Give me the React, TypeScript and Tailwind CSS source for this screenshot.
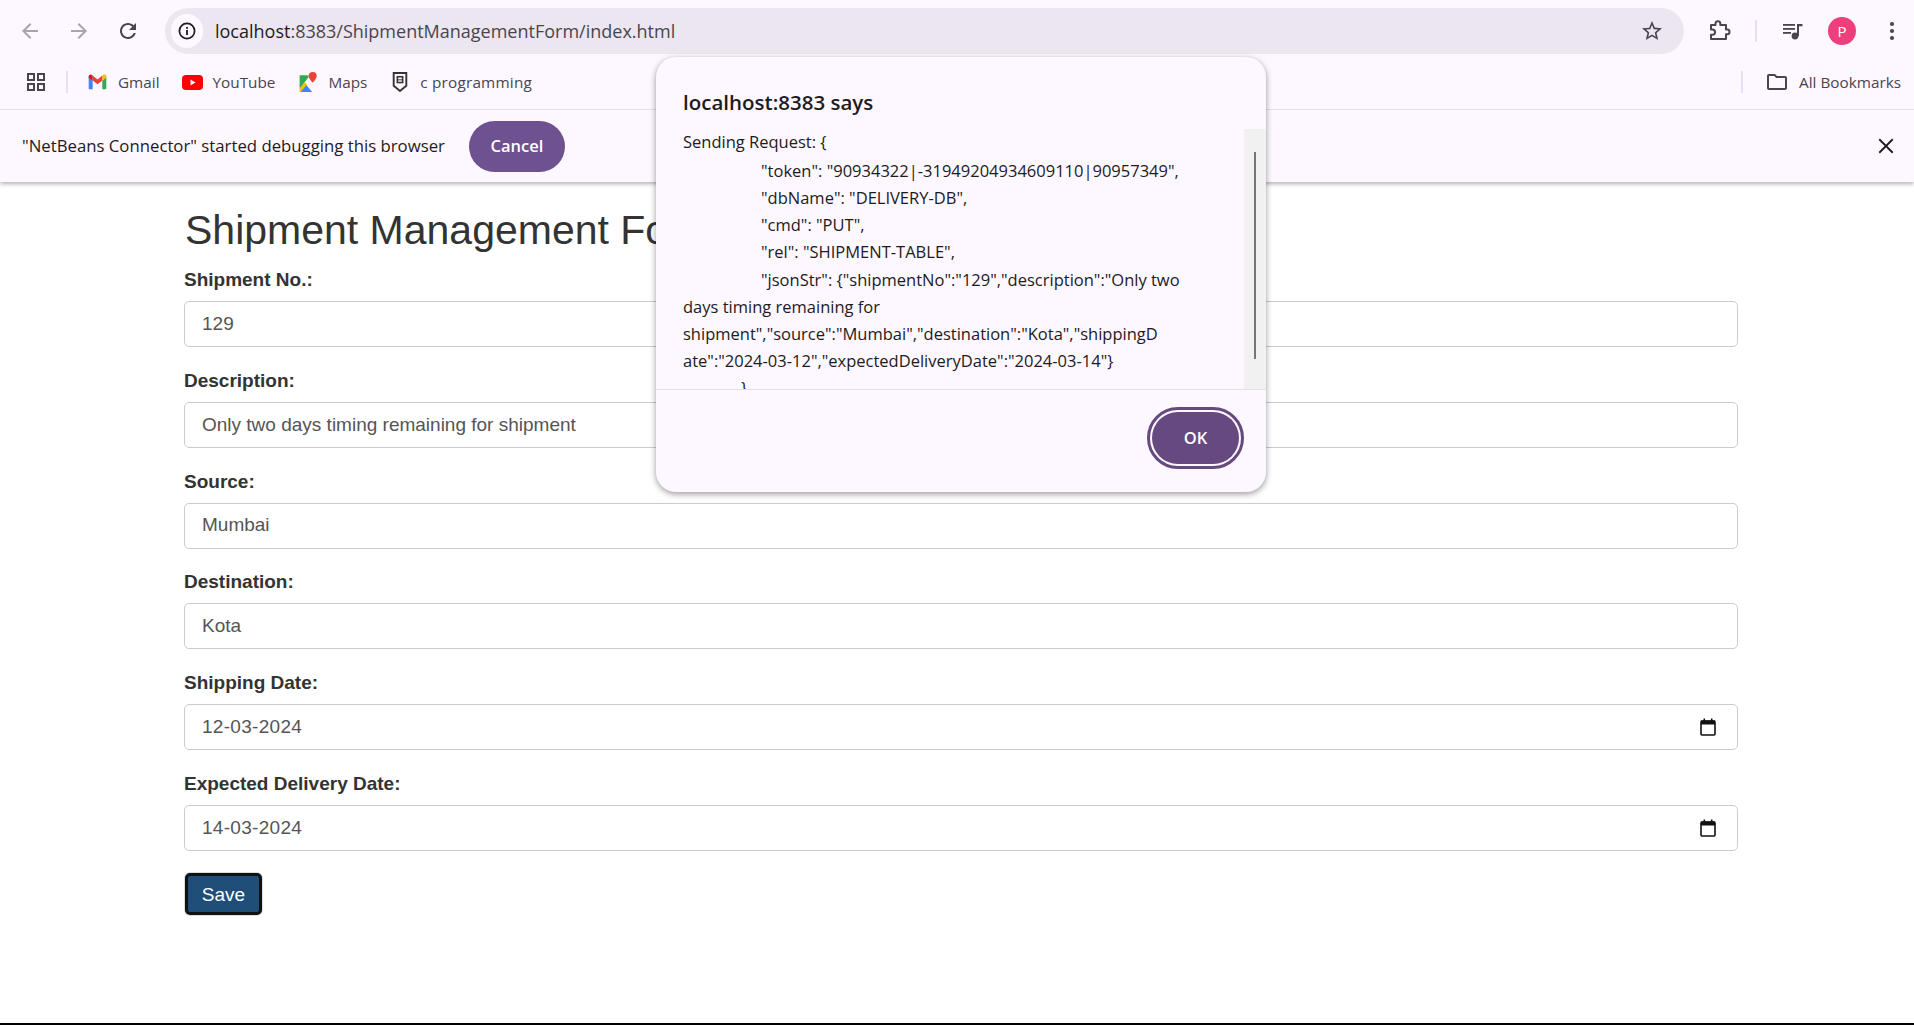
import React from "react";

const uiFont = "font-['Open_Sans','Noto_Sans',sans-serif]";

const fields = [
  { label: "Shipment No.:", value: "129" },
  { label: "Description:", value: "Only two days timing remaining for shipment" },
  { label: "Source:", value: "Mumbai" },
  { label: "Destination:", value: "Kota" },
  { label: "Shipping Date:", value: "12-03-2024", date: true },
  { label: "Expected Delivery Date:", value: "14-03-2024", date: true },
];

function Mi({ d, className, size = 24 }: { d: string; className?: string; size?: number }) {
  return (
    <svg width={size} height={size} viewBox="0 0 24 24" fill="currentColor" className={className}>
      <path d={d} />
    </svg>
  );
}

function Slot({ children }: { children: React.ReactNode }) {
  return <div className="w-[40px] h-[40px] flex items-center justify-center shrink-0">{children}</div>;
}

function NavSlot({ children }: { children: React.ReactNode }) {
  return <div className="w-[49px] h-[40px] flex items-center justify-center shrink-0">{children}</div>;
}

function CalendarIcon() {
  return (
    <svg width="16" height="18" viewBox="0 0 16 18" className="shrink-0">
      <rect x="1" y="3" width="14" height="14" rx="1" fill="none" stroke="#111" strokeWidth="1.6" />
      <rect x="1" y="2.5" width="14" height="4" fill="#111" />
      <rect x="3.5" y="0.5" width="1.6" height="3" fill="#111" />
      <rect x="10.9" y="0.5" width="1.6" height="3" fill="#111" />
    </svg>
  );
}

function Bookmark({ icon, text, className, textClass }: { icon: React.ReactNode; text: string; className?: string; textClass?: string }) {
  return (
    <div className={`flex items-center gap-[10px] ${className ?? ""}`}>
      <span className="w-[21px] h-[21px] flex items-center justify-center">{icon}</span>
      <span className={`text-[15.3px] text-[#49454f] ${textClass ?? ""}`}>{text}</span>
    </div>
  );
}

function BrowserChrome() {
  return (
    <div className={`relative z-10 bg-[#fdf7ff] shadow-[0_2px_4px_rgba(0,0,0,0.3)] ${uiFont}`}>
      <div className="h-[63px] flex items-center pl-[5px] pr-[2px] pb-[1px]">
        <NavSlot>
          <Mi className="text-[#a8a4ac]" d="M20 11H7.83l5.59-5.59L12 4l-8 8 8 8 1.41-1.41L7.83 13H20v-2z" />
        </NavSlot>
        <NavSlot>
          <Mi className="text-[#a8a4ac]" d="M12 4l-1.41 1.41L16.17 11H4v2h12.17l-5.58 5.59L12 20l8-8z" />
        </NavSlot>
        <NavSlot>
          <Mi
            className="text-[#49454f]"
            d="M17.65 6.35C16.2 4.9 14.21 4 12 4c-4.42 0-7.99 3.58-7.99 8s3.57 8 7.99 8c3.73 0 6.84-2.55 7.73-6h-2.08c-.82 2.33-3.04 4-5.65 4-3.31 0-6-2.69-6-6s2.69-6 6-6c1.66 0 3.14.69 4.22 1.78L13 11h7V4l-2.35 2.35z"
          />
        </NavSlot>
        <div className="ml-[13px] flex-1 h-[46px] rounded-full bg-[#ece6f0] flex items-center pl-[6px] pr-[20px]">
          <div className="w-[32px] h-[34px] rounded-full bg-[#fdf7ff] flex items-center justify-center">
            <svg width="20" height="20" viewBox="0 0 20 20">
              <circle cx="10" cy="10" r="7.6" fill="none" stroke="#1d1b20" strokeWidth="1.7" />
              <rect x="9.1" y="9" width="1.8" height="5" fill="#1d1b20" />
              <rect x="9.1" y="6" width="1.8" height="1.8" fill="#1d1b20" />
            </svg>
          </div>
          <span className="ml-[12px] text-[18px] text-[#1d1b20]">
            localhost<span className="text-[#49454f]">:8383/ShipmentManagementForm/index.html</span>
          </span>
          <Mi
            className="ml-auto text-[#49454f]"
            d="M22 9.24l-7.19-.62L12 2 9.19 8.63 2 9.24l5.46 4.73L5.82 21 12 17.27 18.18 21l-1.63-7.03L22 9.24zM12 15.4l-3.76 2.27 1-4.28-3.32-2.88 4.38-.38L12 6.1l1.71 4.04 4.38.38-3.32 2.88 1 4.28L12 15.4z"
          />
        </div>
        <div className="ml-[16px]">
          <Slot>
            <svg width="24" height="24" viewBox="0 0 24 24" fill="none" stroke="#49454f" strokeWidth="2">
              <path
                d="M3 6h4.500V4.600a2.400 2.400 0 0 1 4.800 0V6H18v4.600h1.200a2.300 2.300 0 0 1 0 4.600H18V20H3v-4.200h1.400a2.600 2.600 0 0 0 0-5.200H3z"
                strokeLinejoin="round"
              />
            </svg>
          </Slot>
        </div>
        <div className="ml-[15px] w-[2px] h-[22px] bg-[#e8def8]" />
        <div className="ml-[16px]">
          <Slot>
            <svg width="22" height="20" viewBox="0 0 22 20" fill="#49454f">
              <rect x="1" y="3" width="12" height="1.8" />
              <rect x="1" y="7" width="12" height="1.8" />
              <rect x="1" y="11" width="8" height="1.8" />
              <circle cx="13" cy="15" r="3.4" />
              <path d="M15 15V3h5.5v2.2H17V15z" />
            </svg>
          </Slot>
        </div>
        <div className="ml-[15px] w-[28px] h-[28px] rounded-full bg-[#ee3f7c] text-white text-[15px] flex items-center justify-center">
          P
        </div>
        <div className="ml-[16px]">
          <Slot>
            <svg width="6" height="20" viewBox="0 0 6 20" fill="#49454f">
              <circle cx="3" cy="3" r="2.1" />
              <circle cx="3" cy="10" r="2.1" />
              <circle cx="3" cy="17" r="2.1" />
            </svg>
          </Slot>
        </div>
      </div>

      <div className="h-[47px] flex items-center border-b border-[#e6e0e9] pb-[8px]">
        <svg width="20" height="20" viewBox="0 0 20 20" fill="none" stroke="#49454f" strokeWidth="2" className="ml-[26px]">
          <rect x="2" y="2" width="6" height="6" />
          <rect x="12" y="2" width="6" height="6" />
          <rect x="2" y="12" width="6" height="6" />
          <rect x="12" y="12" width="6" height="6" />
        </svg>
        <div className="ml-[20px] w-[2px] h-[22px] bg-[#e8def8]" />
        <Bookmark
          className="ml-[19px]"
          text="Gmail"
          icon={
            <svg width="21" height="16" viewBox="0 0 24 20">
              <path d="M1 3v15a1 1 0 0 0 1 1h4V8z" fill="#4285f4" />
              <path d="M23 3v15a1 1 0 0 1-1 1h-4V8z" fill="#34a853" />
              <path d="M6 8l6 4.8L18 8V2l-6 4.8L6 2z" fill="#ea4335" />
              <path d="M1 3v2l5 3V2L4.5 1C3 0 1 1 1 3z" fill="#c5221f" />
              <path d="M23 3v2l-5 3V2l1.500-1C21 0 23 1 23 3z" fill="#fbbc04" />
            </svg>
          }
        />
        <Bookmark
          className="ml-[22px]"
          text="YouTube"
          icon={
            <svg width="21" height="15" viewBox="0 0 21 15">
              <rect width="21" height="15" rx="4" fill="#f00" />
              <path d="M8.500 4.500l5 3-5 3z" fill="#fff" />
            </svg>
          }
        />
        <Bookmark
          className="ml-[22px]"
          text="Maps"
          icon={
            <svg width="20" height="21" viewBox="0 0 18 20">
              <path d="M1 3h10L1 16z" fill="#34a853" />
              <path d="M1 19l6-7 6 7z" fill="#4285f4" />
              <path d="M1 16l5-6 2 2-6 7H1z" fill="#fbbc04" />
              <path d="M8 3h4v5z" fill="#a8dab5" />
              <path d="M13.500 0a3.800 3.800 0 0 1 3.800 3.800c0 2.800-3.800 6.200-3.800 6.200S9.700 6.600 9.700 3.800A3.800 3.800 0 0 1 13.500 0z" fill="#ea4335" />
            </svg>
          }
        />
        <Bookmark
          className="ml-[22px]"
          text="c programming"
          textClass="tracking-[0.2px]"
          icon={
            <svg width="16" height="20" viewBox="0 0 14 19" fill="none">
              <path d="M1 1h12v12l-6 5-6-5z" stroke="#333" strokeWidth="1.800" />
              <rect x="4.500" y="4.500" width="5" height="5.500" stroke="#333" strokeWidth="1.500" />
              <rect x="4.500" y="7" width="5" height="0.900" fill="#333" />
            </svg>
          }
        />
        <div className="ml-auto w-[2px] h-[22px] bg-[#e8def8]" />
        <svg width="24" height="24" viewBox="0 0 24 24" className="ml-[22px] text-[#49454f]" fill="currentColor">
          <path d="M20 6h-8l-2-2H4c-1.100 0-2 .900-2 2v12c0 1.100.900 2 2 2h16c1.100 0 2-.900 2-2V8c0-1.100-.900-2-2-2zm0 12H4V6h5.170l2 2H20v10z" />
        </svg>
        <span className="ml-[10px] mr-[13px] text-[15.3px] text-[#49454f]">All Bookmarks</span>
      </div>

      <div className="h-[72px] flex items-center pl-[22px] pr-[19px]">
        <span className="text-[16.75px] text-[#1d1b20]">"NetBeans Connector" started debugging this browser</span>
        <div className="ml-[24px] w-[96px] h-[51px] rounded-full bg-[#6e5191] text-white text-[16.5px] font-semibold flex items-center justify-center">
          Cancel
        </div>
        <svg width="18" height="18" viewBox="0 0 16 16" className="ml-auto" stroke="#1d1b20" strokeWidth="1.600">
          <path d="M2 2l12 12M14 2L2 14" />
        </svg>
      </div>
    </div>
  );
}

function AlertDialog() {
  return (
    <div
      className={`absolute z-20 left-[656px] top-[57px] w-[610px] h-[435px] rounded-[20px] bg-[#fdf7ff] shadow-[0_2px_6px_rgba(0,0,0,0.4)] flex flex-col overflow-hidden ${uiFont}`}
    >
      <div className="h-[72px] pl-[27px] pt-[28px] text-[20.5px] leading-[34px] font-semibold text-[#1d1b20]">
        localhost:8383 says
      </div>
      <div className="h-[261px] flex border-b border-[#e6e0e9]">
        <div className="flex-1 overflow-hidden whitespace-nowrap pl-[27px] pt-[0.5px] text-[16.5px] leading-[27.2px] text-[#1d1b20]">
          <div className="-mt-[1.5px] mb-[1.5px]">Sending Request: {"{"}</div>
          <div className="pl-[78px]">"token": "90934322|-31949204934609110|90957349",</div>
          <div className="pl-[78px]">"dbName": "DELIVERY-DB",</div>
          <div className="pl-[78px]">"cmd": "PUT",</div>
          <div className="pl-[78px]">"rel": "SHIPMENT-TABLE",</div>
          <div className="pl-[78px]">"jsonStr": {"{"}"shipmentNo":"129","description":"Only two</div>
          <div>days timing remaining for</div>
          <div>shipment","source":"Mumbai","destination":"Kota","shippingD</div>
          <div>ate":"2024-03-12","expectedDeliveryDate":"2024-03-14"{"}"}</div>
          <div className="pl-[58px]">{"}"}</div>
        </div>
        <div className="w-[22px] bg-[#f1f1f1] pt-[23px] pl-[10px]">
          <div className="w-[2px] h-[207px] bg-[#77757b]" />
        </div>
      </div>
      <div className="flex-1 flex justify-end pt-[17px] pr-[22px]">
        <div className="w-[97px] h-[62px] rounded-full border-[3px] border-[#65497f] p-[2px]">
          <div className="w-full h-full rounded-full bg-[#65497f] text-white text-[16.5px] font-semibold flex items-center justify-center">
            OK
          </div>
        </div>
      </div>
    </div>
  );
}

function Field({ label, value, date }: { label: string; value: string; date?: boolean }) {
  return (
    <div className="mb-[21.8px]">
      <div className="h-[25px] mb-[8px] text-[19px] leading-[24px] font-bold text-[#333]">{label}</div>
      <div className="h-[46px] rounded-[5px] border border-[#ccc] bg-white flex items-center justify-between pl-[17px] pr-[21px] text-[19px] text-[#555]">
        <span className={date ? "tracking-[0.3px]" : ""}>{value}</span>
        {date && <CalendarIcon />}
      </div>
    </div>
  );
}

export default function App() {
  return (
    <div className="relative h-[1025px] overflow-hidden flex flex-col bg-white font-['Liberation_Sans',Arial,sans-serif]">
      <BrowserChrome />
      <AlertDialog />
      <main className="flex-1 pl-[184px] pr-[176px] pt-[23px]">
        <h1 className="h-[50px] mb-[13px] pl-[1px] text-[41px] leading-[50px] font-normal text-[#333]">
          Shipment Management Form
        </h1>
        {fields.map((f) => (
          <Field key={f.label} label={f.label} value={f.value} date={f.date} />
        ))}
        <button className="ml-[1px] w-[77px] h-[42px] pt-[2px] rounded-[5px] bg-[#1f4e79] border-[3px] border-[#111] shadow-[0_0_0_1px_#ddd] text-white text-[19px] flex items-center justify-center">
          Save
        </button>
      </main>
      <div className="h-[2px] bg-black" />
    </div>
  );
}
